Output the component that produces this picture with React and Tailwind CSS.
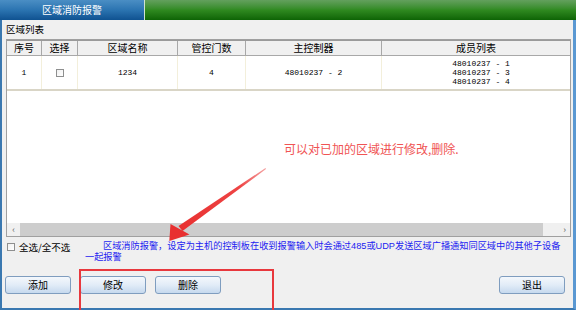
const CJK = { fontFamily: '"Noto Sans CJK SC", "Liberation Sans", sans-serif' };
const LAT = { fontFamily: '"Liberation Sans", "Noto Sans CJK SC", sans-serif' };
const MONO = { fontFamily: '"Liberation Mono", "Noto Sans CJK SC", monospace' };

const COLS = 'grid grid-cols-[35px_36px_100px_68px_136px_1fr]';
const HEADERS = ['序号', '选择', '区域名称', '管控门数', '主控制器', '成员列表'];

const Btn = ({ children, className = '' }) => (
  <button
    className={`w-[66px] h-[18px] rounded-[3px] border border-[#7f9dbf] bg-gradient-to-b from-[#f4f8fc] via-[#e2ecf7] to-[#c6d9ee] text-[10px] leading-none text-black flex items-center justify-center ${className}`}
    style={CJK}
  >
    {children}
  </button>
);

const Box = () => (
  <span className="block w-[8px] h-[8px] border border-[#8e8f8f] bg-gradient-to-br from-[#f0f0f0] to-white" />
);

export default function App() {
  return (
    <div className="relative w-[576px] h-[310px] overflow-hidden flex flex-col bg-[#f0f0f0]" style={CJK}>
      {/* title bar */}
      <div className="flex h-[20px] shrink-0">
        <div className="w-[144px] bg-gradient-to-b from-[#4a8ec4] via-[#2b74b1] to-[#0f5291] flex items-center justify-center text-white text-[10px] leading-none">
          区域消防报警
        </div>
        <div className="w-px bg-[#cfe3d0]" />
        <div className="flex-1 bg-gradient-to-b from-[#63a05d] via-[#2f8a20] to-[#0d6405]" />
      </div>

      {/* body */}
      <div className="flex-1 flex flex-col border-l-2 border-r-[3px] border-b-2 border-l-[#3a78b0] border-r-[#5a98d2] border-b-[#3a78b0]">
        <div className="h-[19px] pl-[4px] flex items-center text-[9.5px] text-black">区域列表</div>

        <div className="ml-[4px] w-[565px] h-[198px] border border-[#a0a0a0] bg-white flex flex-col">
          <div className={`${COLS} h-[16px] border-t border-t-[#9a9a9a] border-b border-b-[#a8a8a8] bg-[#f0f0f0]`}>
            {HEADERS.map((h, i) => (
              <div
                key={h}
                className={`flex items-center justify-center text-[10px] leading-none text-black ${i < 5 ? 'border-r border-[#a8a8a8]' : ''}`}
              >
                {h}
              </div>
            ))}
          </div>

          <div className={`${COLS} h-[35px] border-b-2 border-[#d9d5c6] text-[8px] text-black`} style={MONO}>
            <div className="flex items-center justify-center border-r border-[#f3efdb]">1</div>
            <div className="flex items-center justify-center border-r border-[#f3efdb]"><Box /></div>
            <div className="flex items-center justify-center border-r border-[#f3efdb]">1234</div>
            <div className="flex items-center justify-center border-r border-[#f3efdb]">4</div>
            <div className="flex items-center justify-center border-r border-[#f3efdb] whitespace-pre">48010237 - 2</div>
            <div className="flex flex-col items-center justify-center leading-[9px] whitespace-pre pl-[10px]">
              <span>48010237 - 1</span>
              <span>48010237 - 3</span>
              <span>48010237 - 4</span>
            </div>
          </div>

          <div className="flex-1" />

          <div className="h-[13px] flex bg-[#f0f0f0] text-[#606060] text-[9px] leading-none">
            <div className="w-[13px] flex items-center justify-center">‹</div>
            <div className="w-[523px] bg-[#cdcdcd]" />
            <div className="flex-1 flex items-center justify-end pr-[4px]">›</div>
          </div>
        </div>

        <div className="h-[39px] flex items-start pt-[4px]">
          <div className="w-[83px] shrink-0 pl-[5px] pt-[2px] flex items-center gap-[4px] text-[9.5px] leading-[8px] text-black">
            <Box />
            <span>全选/全不选</span>
          </div>
          <p className="flex flex-col text-[9.2px] leading-[11px] text-[#1c1cf0] whitespace-nowrap" style={LAT}>
            <span className="pl-[18px]">区域消防报警，设定为主机的控制板在收到报警输入时会通过485或UDP发送区域广播通知同区域中的其他子设备</span>
            <span>一起报警</span>
          </p>
        </div>

        <div className="h-[18px] flex gap-[9px] pl-[3px] pr-[8px]">
          <Btn>添加</Btn>
          <Btn>修改</Btn>
          <Btn>删除</Btn>
          <Btn className="ml-auto">退出</Btn>
        </div>
        <div className="h-[14px]" />
      </div>

      {/* annotations */}
      <div className="absolute left-[284px] top-[143px] text-[12px] leading-none text-[#f05454] whitespace-nowrap">
        可以对已加的区域进行修改,删除.
      </div>
      <div className="absolute left-[79px] top-[269px] w-[195px] h-[60px] border-2 border-[#e8383d]" />
      <svg className="absolute left-0 top-0 pointer-events-none" width="576" height="310" viewBox="0 0 576 310">
        <defs>
          <linearGradient id="arr" x1="265" y1="168" x2="180" y2="230" gradientUnits="userSpaceOnUse">
            <stop offset="0" stopColor="#f4a0a0" />
            <stop offset="0.3" stopColor="#ee4444" />
            <stop offset="1" stopColor="#e83030" />
          </linearGradient>
        </defs>
        <polygon points="265.5,168 266,169 182.5,231 178.5,226" fill="url(#arr)" />
        <polygon points="169.3,241 170.5,224 189.5,234.5" fill="#e83030" />
      </svg>
    </div>
  );
}
